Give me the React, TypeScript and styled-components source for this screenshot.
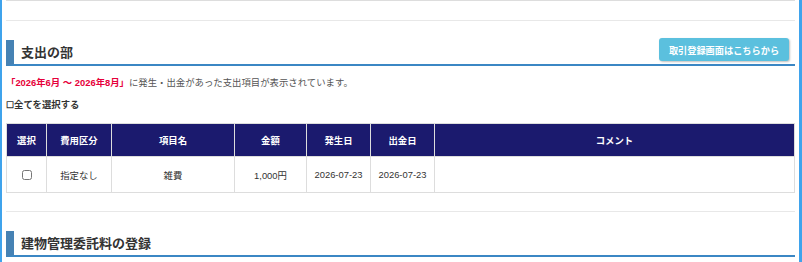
import React from "react";
import styled, { createGlobalStyle } from "styled-components";

const Global = createGlobalStyle`
  html, body { margin: 0; padding: 0; background: #fff; }
  body { font-family: "Liberation Sans", "Noto Sans CJK JP", sans-serif; color: #333; }
`;

const Frame = styled.div`
  width: 802px;
  height: 262px;
  box-sizing: border-box;
  border-left: 2px solid #3fa3ec;
  border-right: 3px solid #3fa3ec;
  padding: 0 4px;
  overflow: hidden;
`;

const Rule = styled.div<{ $tone?: string; $top?: number }>`
  height: 1px;
  background: ${(p) => p.$tone ?? "#e8e8e8"};
  margin-top: ${(p) => p.$top ?? 0}px;
  margin-bottom: 19px;
`;

const SectionHead = styled.div`
  display: flex;
  align-items: flex-start;
  height: 24px;
  border-left: 8px solid #4682b4;
  border-bottom: 2px solid #3b87c4;
`;

const Title = styled.h2`
  margin: 0 0 0 7px;
  font-size: 13px;
  line-height: 25px;
  font-weight: bold;
  color: #333;
`;

const InfoButton = styled.button`
  margin: -2px 6px 0 auto;
  height: 23px;
  width: 130px;
  padding: 0;
  border: none;
  border-radius: 3px;
  background: #5bc0de;
  color: #fff;
  font-family: inherit;
  font-size: 9.2px;
  font-weight: bold;
  box-shadow: 1px 1px 2px rgba(0, 0, 0, 0.25);
`;

const Notice = styled.p`
  margin: 10px 0 0;
  font-size: 9.4px;
  line-height: 14px;
  color: #555;
`;

const Period = styled.span`
  color: #e6003a;
  font-weight: bold;
`;

const SelectAll = styled.div`
  margin-top: 8px;
  font-size: 9.4px;
  line-height: 14px;
  font-weight: bold;
  color: #333;
`;

const Table = styled.table`
  margin-top: 11px;
  width: 100%;
  border-collapse: collapse;
  table-layout: fixed;
  font-size: 9.4px;
  border: 1px solid #ddd;
`;

const Th = styled.th<{ $w?: number }>`
  width: ${(p) => (p.$w ? `${p.$w}px` : "auto")};
  height: 32px;
  padding: 0;
  background: #1b1a6e;
  color: #fff;
  font-weight: bold;
  text-align: center;
  border: 1px solid #ddd;
`;

const Td = styled.td`
  height: 35px;
  padding: 0;
  text-align: center;
  color: #333;
  border: 1px solid #ddd;
`;

const Check = styled.input`
  width: 10px;
  height: 10px;
  margin: 0;
  vertical-align: middle;
`;

const columns: { label: string; w?: number }[] = [
  { label: "選択", w: 39 },
  { label: "費用区分", w: 64 },
  { label: "項目名", w: 122 },
  { label: "金額", w: 71 },
  { label: "発生日", w: 63 },
  { label: "出金日", w: 63 },
  { label: "コメント" },
];

export default function App() {
  return (
    <>
      <Global />
      <Frame>
        <Rule $tone="#dddddd" />
        <Rule />
        <SectionHead>
          <Title>支出の部</Title>
          <InfoButton>取引登録画面はこちらから</InfoButton>
        </SectionHead>
        <Notice>
          <Period>「2026年6月 ～ 2026年8月」</Period>
          に発生・出金があった支出項目が表示されています。
        </Notice>
        <SelectAll>☐全てを選択する</SelectAll>
        <Table>
          <thead>
            <tr>
              {columns.map((c) => (
                <Th key={c.label} $w={c.w}>
                  {c.label}
                </Th>
              ))}
            </tr>
          </thead>
          <tbody>
            <tr>
              <Td>
                <Check type="checkbox" />
              </Td>
              <Td>指定なし</Td>
              <Td>雑費</Td>
              <Td>1,000円</Td>
              <Td>2026-07-23</Td>
              <Td>2026-07-23</Td>
              <Td></Td>
            </tr>
          </tbody>
        </Table>
        <Rule $top={18} />
        <SectionHead>
          <Title>建物管理委託料の登録</Title>
        </SectionHead>
      </Frame>
    </>
  );
}
